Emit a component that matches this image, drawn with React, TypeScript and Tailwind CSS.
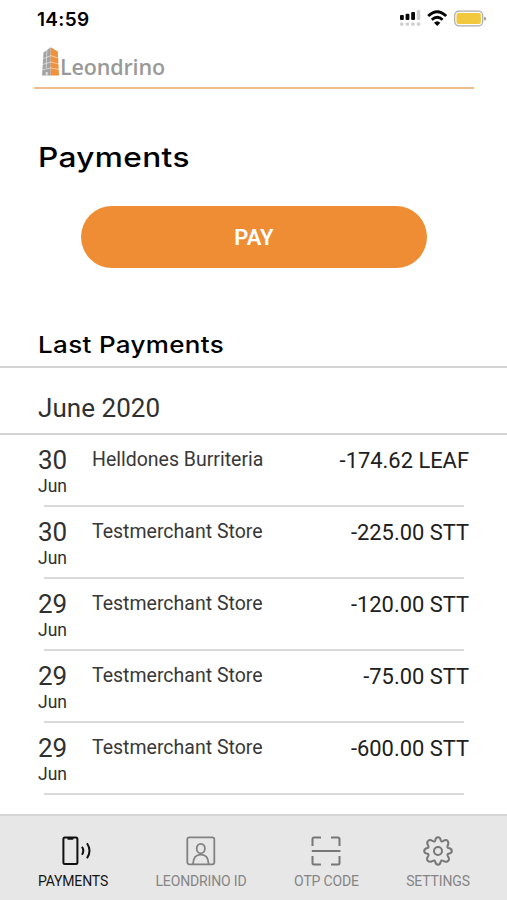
import React from "react";

const payments = [
  { day: "30", month: "Jun", merchant: "Helldones Burriteria", amount: "-174.62 LEAF" },
  { day: "30", month: "Jun", merchant: "Testmerchant Store", amount: "-225.00 STT" },
  { day: "29", month: "Jun", merchant: "Testmerchant Store", amount: "-120.00 STT" },
  { day: "29", month: "Jun", merchant: "Testmerchant Store", amount: "-75.00 STT" },
  { day: "29", month: "Jun", merchant: "Testmerchant Store", amount: "-600.00 STT" },
];

function StatusBar() {
  return (
    <div className="flex h-[38px] items-start justify-between pl-[37px] pr-[20px]">
      <span className="mt-[8px] font-['Inter',sans-serif] text-[19px] font-semibold leading-6 tracking-[0.3px] text-black">14:59</span>
      <div className="flex pt-[9px]">
        <svg width="22" height="18" viewBox="0 0 22 18">
          <g fill="#080808">
            <rect x="0" y="6" width="3.8" height="5" rx="1" />
            <rect x="5.6" y="4.7" width="3.8" height="6.3" rx="1" />
            <rect x="11.2" y="3" width="3.8" height="8" rx="1" />
          </g>
          <g fill="#cfcfcf">
            <rect x="16.8" y="1" width="3.5" height="10" rx="1" />
            <rect x="0" y="13.5" width="3.5" height="3.3" rx="1" />
            <rect x="5.6" y="13.5" width="3.5" height="3.3" rx="1" />
            <rect x="11.2" y="13.5" width="3.5" height="3.3" rx="1" />
            <rect x="16.8" y="13.5" width="3.5" height="3.3" rx="1" />
          </g>
        </svg>
        <svg className="ml-[5px]" width="21" height="18" viewBox="0 0 21 18" fill="none" stroke="#050505" strokeWidth="2.8">
          <path d="M1.2 7.1Q10.2 -1.5 19.2 7.1" />
          <path d="M4.8 10.8Q10.2 5.8 15.6 10.8" />
          <path d="M7 13.8Q10.2 10.8 13.4 13.8L10.2 17Z" fill="#050505" stroke="none" />
        </svg>
        <svg className="ml-[6px]" width="33" height="18" viewBox="0 0 33 18">
          <rect x=".7" y="2.2" width="28" height="14.6" rx="4.2" fill="#fff" stroke="#aaa" strokeWidth="1.2" />
          <rect x="2.5" y="4" width="24.4" height="11" rx="2" fill="#f2c83e" />
          <path d="M30.2 7.6q2 .7 2 2.1t-2 2.1Z" fill="#999" />
        </svg>
      </div>
    </div>
  );
}

function Logo() {
  return (
    <div className="flex h-[49px] pl-[8px] pt-[8px]">
      <svg className="shrink-0" width="18" height="31" viewBox="0 0 18 31">
        <path d="M1.5 6.5 8.7 1.2V29.5H0Z" fill="#a3a3a3" />
        <path d="M8.7 1.2 15.8 5.5 17 29.5H8.7Z" fill="#f0923d" />
        <path d="M0 13.2 8.7 9.7 17 12.2M0 18.7 8.7 16 17 18M0 23.9 8.7 22 17 23.4M4.9 3.5 4.2 22" fill="none" stroke="#fff" strokeOpacity=".65" strokeWidth=".8" />
        <path d="M3.7 26h2v3.5h-2Z" fill="#ddd" />
      </svg>
      <span className="mt-[7px] whitespace-nowrap font-['Open_Sans',sans-serif] text-[21.5px] font-semibold leading-[28px] tracking-[-0.15px] text-[#999]">Leondrino</span>
    </div>
  );
}

function PhoneIcon() {
  return (
    <svg width="30" height="30" viewBox="0 0 30 30" fill="none" stroke="#111" strokeWidth="2">
      <rect x="1.4" y="1.5" width="14" height="26.5" rx="1.5" />
      <path d="M5.3 1.5h6.2v1.3q0 1-1 1H6.3q-1 0-1-1Z" fill="#111" stroke="none" />
      <path d="M20 10.8q2.6 4 0 8M25 7.3q5 7.5 0 15" />
    </svg>
  );
}

function PersonIcon() {
  return (
    <svg width="30" height="30" viewBox="0 0 30 30" fill="none" stroke="#818181" strokeWidth="1.8">
      <rect x="1.3" y="1.3" width="27" height="27" rx="2" />
      <ellipse cx="14.8" cy="12.6" rx="4.1" ry="4.8" />
      <path d="M7 28c.2-6.1 3-9.3 7.8-9.3s7.6 3.2 7.8 9.3" />
    </svg>
  );
}

function ScanIcon() {
  return (
    <svg width="30" height="30" viewBox="0 0 30 30" fill="none" stroke="#777" strokeWidth="2">
      <path d="M1.5 10V3q0-1.5 1.5-1.5h7M20 1.5h7q1.5 0 1.5 1.5v7M1.5 20v7q0 1.5 1.5 1.5h7M20 28.5h7q1.5 0 1.5-1.5v-7M.8 15h28.6" />
    </svg>
  );
}

function GearIcon() {
  return (
    <svg width="30" height="30" viewBox="0 0 30 30" fill="none" stroke="#777" strokeWidth="2" strokeLinejoin="round">
      <path d="M12.2 4.5Q12.8 1.3 15 1.3T17.8 4.5Q18.2 6 20 5.2Q23 3 24.6 4.8T24.7 9.7Q23.8 11.5 25.5 12.1Q28.8 12.7 28.8 15T25.5 17.8Q23.9 18.4 24.8 20Q27 23 25 24.9T20.1 24.8Q18.4 23.8 17.8 25.5Q17.2 28.7 15 28.7T12.2 25.5Q11.6 23.8 9.9 24.8Q7 26.7 5 24.9T5.2 20Q6.1 18.3 4.5 17.8Q1.2 17.2 1.2 15T4.5 12.1Q6.2 11.5 5.2 9.7Q3.3 6.8 5.1 4.9T9.9 5.2Q11.8 6.2 12.2 4.5Z" />
      <circle cx="15" cy="15" r="4" />
    </svg>
  );
}

export default function App() {
  return (
    <main className="flex h-[900px] w-[507px] flex-col overflow-hidden bg-white font-['Roboto',sans-serif]">
      <StatusBar />
      <header className="ml-[34px] w-[440px] border-b-2 border-[#efbd8d]">
        <Logo />
      </header>
      <section className="flex h-[277px] flex-col pl-[38px]">
        <h1 className="mt-[50px] origin-left scale-x-[1.15] whitespace-nowrap font-['Inter',sans-serif] text-[27.5px] font-medium leading-[36px] tracking-[0.3px] text-black">Payments</h1>
        <button className="ml-[43px] mt-[31px] h-[62px] w-[346px] shrink-0 rounded-full bg-[#ef8d34] text-[22px] font-semibold text-white">PAY</button>
        <h2 className="mt-[61px] origin-left scale-x-[1.13] whitespace-nowrap font-['Inter',sans-serif] text-[23px] font-medium leading-[32px] tracking-[0.3px] text-black">Last Payments</h2>
      </section>
      <div className="flex h-[69px] shrink-0 items-center border-y-2 border-[#d4d4d4] pl-[38px] pt-[15px] text-[26px] leading-[30px] tracking-[0.05px] text-[#303030]">June 2020</div>
      <ul className="shrink-0 pl-[38px] pr-[38px]">
        {payments.map((p, i) => (
          <li key={i} className="flex h-[72px] flex-col">
            <div className="flex h-[70px] shrink-0">
              <div className="w-[54px] pt-[10px] text-[#303030]">
                <div className="text-[26px] leading-[30px]">{p.day}</div>
                <div className="mt-[1px] text-[17.5px] leading-[20px]">{p.month}</div>
              </div>
              <span className="pt-[12px] text-[19.5px] leading-[25px] text-[#383838]">{p.merchant}</span>
              <span className="ml-auto pt-[13px] text-[21.9px] leading-[26px] text-[#202020]">{p.amount}</span>
            </div>
            <div className="ml-[6px] mr-[5px] h-[2px] bg-[#dadada]" />
          </li>
        ))}
      </ul>
      <nav className="mt-auto flex h-[86px] shrink-0 border-t-2 border-[#d5d5d5] bg-[#e7e7e7] pt-[20px] text-[14px] leading-[20px] tracking-[-0.15px] text-[#858585]">
        <div className="ml-[13px] flex w-[120px] flex-col items-center gap-[5px] text-[#151515]">
          <div className="pl-[8px]">
            <PhoneIcon />
          </div>
          <span>PAYMENTS</span>
        </div>
        <div className="ml-[8px] flex w-[120px] flex-col items-center gap-[5px]">
          <PersonIcon />
          <span>LEONDRINO ID</span>
        </div>
        <div className="ml-[5px] flex w-[120px] flex-col items-center gap-[5px]">
          <ScanIcon />
          <span className="pl-[1px]">OTP CODE</span>
        </div>
        <div className="ml-[1px] flex w-[102px] flex-col items-center gap-[5px]">
          <GearIcon />
          <span>SETTINGS</span>
        </div>
      </nav>
    </main>
  );
}
